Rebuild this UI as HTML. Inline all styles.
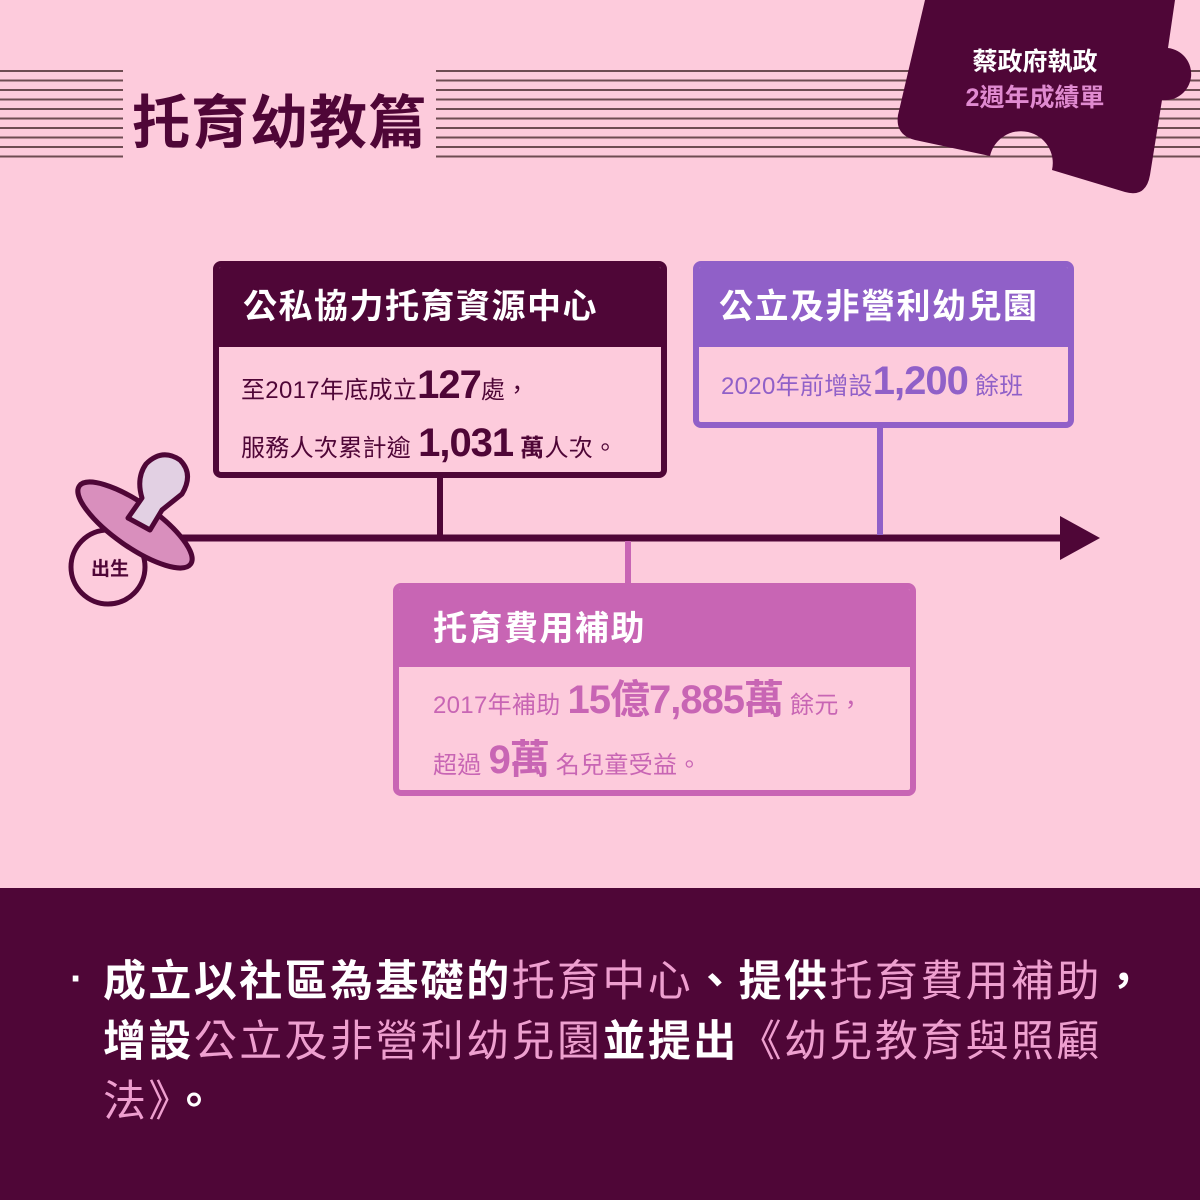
<!DOCTYPE html>
<html><head><meta charset="utf-8"><style>
*{margin:0;padding:0;box-sizing:border-box}
body{width:1200px;height:1200px;background:#fdcbdc;position:relative;overflow:hidden;font-family:"Liberation Sans","Noto Sans CJK TC",sans-serif;color:#4f0637}
.abs{position:absolute}
.stripes{background:repeating-linear-gradient(to bottom,#6e4c52 0 2px,transparent 2px 9.5px)}
.box{position:absolute;border:6px solid;border-radius:8px;background:#fdcbdc;overflow:hidden}
.hd{color:#fff;font-weight:bold;font-size:34px;letter-spacing:1.5px;padding-left:24px}
.bd{font-size:24px;letter-spacing:0.3px;white-space:nowrap}
.big{font-size:40px;font-weight:bold;letter-spacing:-1px}
.hl{color:#ee9fcf;font-weight:normal}
</style></head><body>
<div class="abs stripes" style="left:0;top:70px;width:123px;height:88px"></div>
<div class="abs stripes" style="left:436px;top:70px;width:764px;height:88px"></div>
<div class="abs" style="left:132px;top:76px;font-size:58px;font-weight:bold;letter-spacing:1px">托育幼教篇</div>

<svg class="abs" style="left:0;top:0" width="1200" height="1200">
<path d="M925 0 L1175 0 L1168 48 A20 20 0 1 1 1162 100 L1150 175 Q1146 198 1125 192 L1052 170 A30 30 0 1 0 990 156 L915 140 Q895 135 898 115 Z" fill="#4f0637"/>
<line x1="150" y1="538" x2="1065" y2="538" stroke="#4f0637" stroke-width="7"/>
<polygon points="1060,516 1100,538 1060,560" fill="#4f0637"/>
<line x1="440" y1="477" x2="440" y2="538" stroke="#4f0637" stroke-width="6"/>
<line x1="880" y1="427" x2="880" y2="535" stroke="#9060c8" stroke-width="6"/>
<line x1="628" y1="541" x2="628" y2="585" stroke="#c865b4" stroke-width="6"/>
<circle cx="108" cy="567" r="37" fill="#fdcbdc" stroke="#4f0637" stroke-width="5"/>
<ellipse cx="135" cy="525" rx="68" ry="22" transform="rotate(35 135 525)" fill="#d98fbd" stroke="#4f0637" stroke-width="5"/>
<path d="M128 518 L142 498 Q136 478 146 464 Q162 448 180 460 Q194 474 182 494 L162 510 L150 530 Z" fill="#e2d0e3" stroke="#4f0637" stroke-width="5" stroke-linejoin="round"/>
<text x="110" y="575" font-size="19" font-weight="bold" fill="#4f0637" text-anchor="middle" font-family="Liberation Sans,Noto Sans CJK TC,sans-serif">出生</text>
</svg>
<div class="abs" style="left:945px;top:44px;width:180px;text-align:center;font-size:25px;font-weight:bold;color:#fff;line-height:36px">蔡政府執政<br><span style="color:#e08ad0">2週年成績單</span></div>

<div class="box" style="left:213px;top:261px;width:454px;height:217px;border-color:#4f0637">
<div class="hd" style="background:#4f0637;height:80px;line-height:80px">公私協力托育資源中心</div>
<div class="bd" style="padding:12px 0 0 22px;line-height:52px">至2017年底成立<span class="big">127</span>處，<br>服務人次累計逾 <span class="big">1,031</span> <b>萬</b>人次。</div>
</div>
<div class="box" style="left:693px;top:261px;width:381px;height:167px;border-color:#9060c8;color:#9060c8">
<div class="hd" style="background:#9060c8;height:80px;line-height:80px;padding-left:20px">公立及非營利幼兒園</div>
<div class="bd" style="padding:8px 0 0 22px;line-height:52px">2020年前增設<span class="big">1,200</span> 餘班</div>
</div>
<div class="box" style="left:393px;top:583px;width:523px;height:213px;border-color:#c865b4;color:#c865b4">
<div class="hd" style="background:#c865b4;height:78px;line-height:80px;padding-left:34px">托育費用補助</div>
<div class="bd" style="padding:6px 0 0 34px;line-height:54px">2017年補助 <span class="big">15億7,885萬</span> 餘元，<br>超過 <span class="big">9萬</span> 名兒童受益。</div>
</div>

<div class="abs" style="left:0;top:888px;width:1200px;height:312px;background:#4f0637"></div>
<div class="abs" style="left:70px;top:957px;font-size:40px;font-weight:bold;color:#fff">·</div>
<div class="abs" style="left:103px;top:952px;width:1090px;font-size:43px;letter-spacing:2.4px;line-height:60px;color:#fff;font-weight:bold">成立以社區為基礎的<span class="hl">托育中心</span>、提供<span class="hl">托育費用補助</span>，<br>增設<span class="hl">公立及非營利幼兒園</span>並提出<span class="hl">《幼兒教育與照顧<br>法》</span>。</div>
</body></html>
